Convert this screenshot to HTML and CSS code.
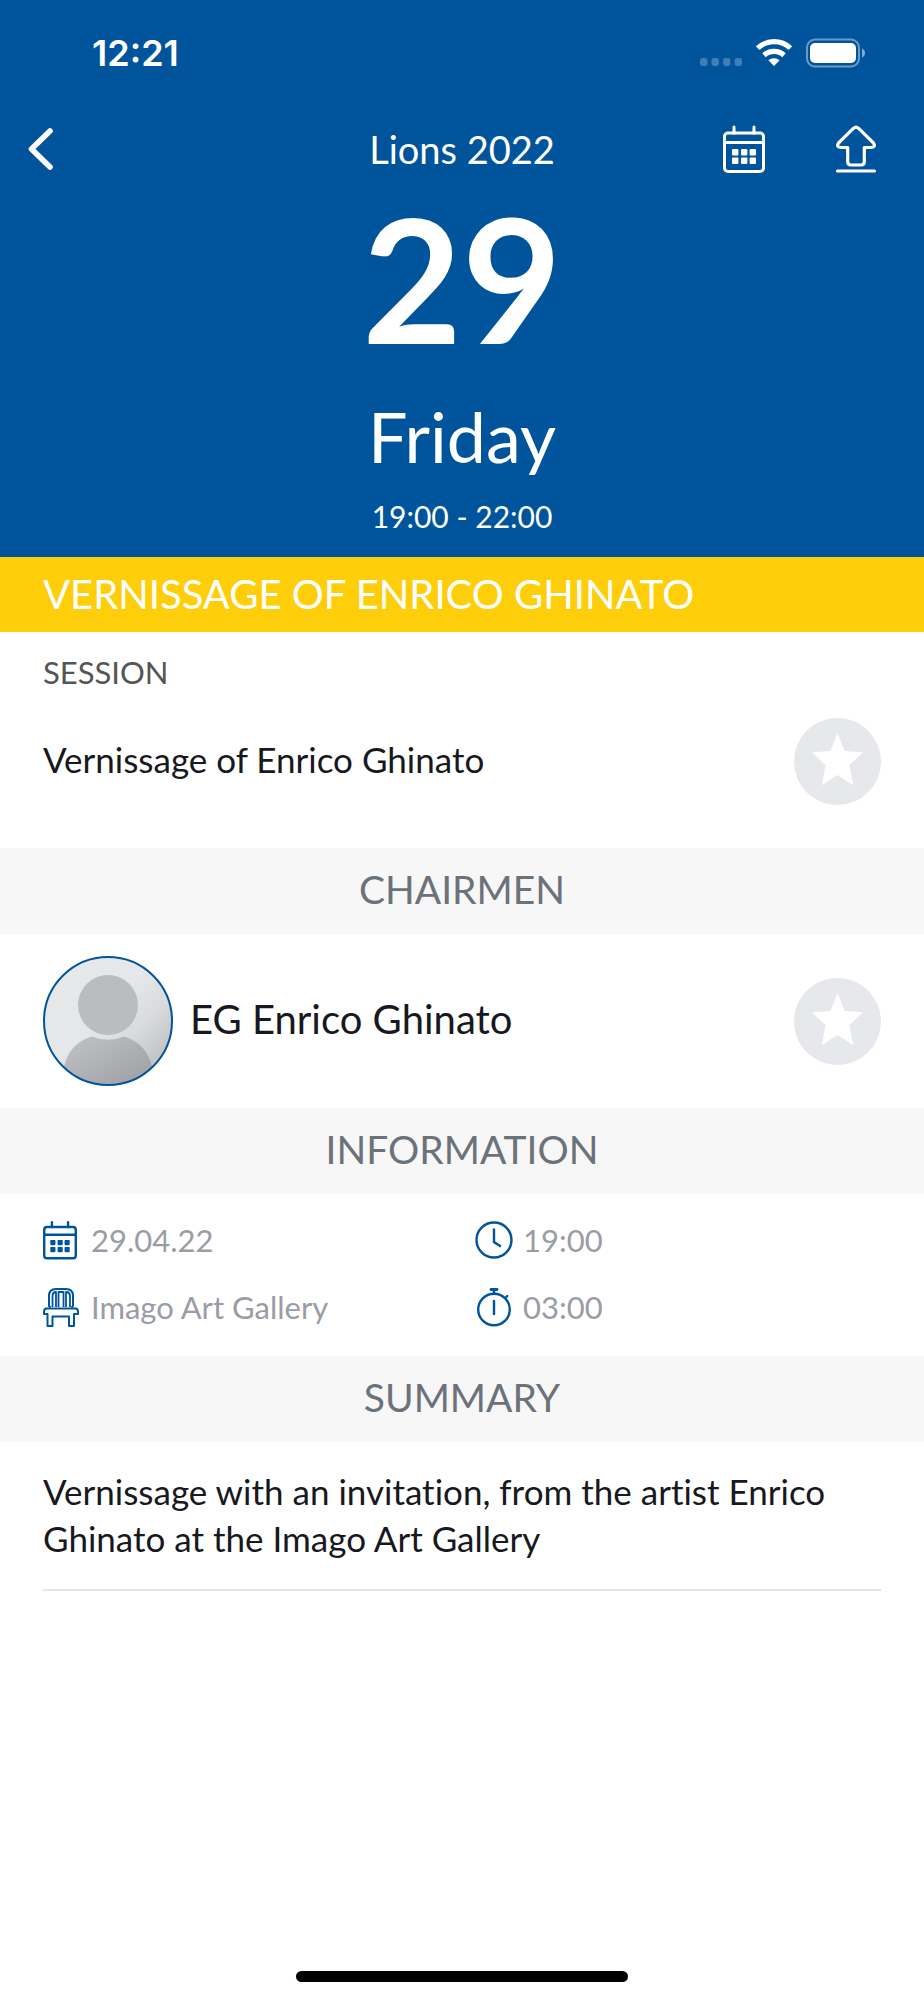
FILE: index.html
```html
<!DOCTYPE html>
<html lang="en">
<head>
<meta charset="utf-8">
<meta name="viewport" content="width=device-width, initial-scale=1">
<title>Lions 2022</title>
<link rel="stylesheet" href="styles.css">
</head>
<body>
<svg class="defs" aria-hidden="true">
  <symbol id="calendar" viewBox="0 0 42 48">
    <rect x="1.5" y="8" width="39" height="38.5" rx="3.5" fill="none" stroke="currentColor" stroke-width="3"/>
    <path d="M2 17.5h38M11 2v6M31 2v6" fill="none" stroke="currentColor" stroke-width="3" stroke-linecap="round"/>
    <g fill="currentColor"><rect x="9" y="24" width="6.4" height="6.4" rx="1"/><rect x="18" y="24" width="6.4" height="6.4" rx="1"/><rect x="26.6" y="24" width="6.4" height="6.4" rx="1"/><rect x="9" y="32.6" width="6.4" height="6.4" rx="1"/><rect x="18" y="32.6" width="6.4" height="6.4" rx="1"/><rect x="26.6" y="32.6" width="6.4" height="6.4" rx="1"/></g>
  </symbol>
  <symbol id="star" viewBox="0 0 87 87">
    <path d="M43.500 15l7 18 18.500 1.300-13.700 13 4 20-15.800-10.200-15.800 10.200 4-20L18 34.300 36.500 33z" fill="#fff"/>
  </symbol>
</svg>
<header class="hero">
  <div class="status">
    <span class="clock">12:21</span>
    <div class="indicators">
      <svg width="42" height="30" viewBox="0 0 42 30" fill="#fff" fill-opacity=".25"><rect y="20" width="7.4" height="8" rx="2.4"/><rect x="11.5" y="20" width="7.4" height="8" rx="2.4"/><rect x="23" y="20" width="7.4" height="8" rx="2.4"/><rect x="34.6" y="20" width="7.4" height="8" rx="2.4"/></svg>
      <svg width="38" height="30" viewBox="0 0 38 30"><g fill="none" stroke="#fff" stroke-width="5.2"><path d="M2.6 10.2a24 24 0 0 1 32.8 0"/><path d="M9 17.2a15 15 0 0 1 20 0"/></g><path d="M13.4 22.3a8.6 8.6 0 0 1 11.2 0L19 28z" fill="#fff"/></svg>
      <svg width="60" height="30" viewBox="0 0 60 30"><rect x="1" y="1.5" width="52" height="27" rx="8" fill="none" stroke="#fff" stroke-opacity=".42" stroke-width="2"/><rect x="4" y="5" width="46" height="20" rx="5" fill="#fff"/><path d="M56 10.5c4 1.500 4 7.500 0 9z" fill="#fff" fill-opacity=".5"/></svg>
    </div>
  </div>
  <nav class="bar">
    <button class="icon-button" type="button" aria-label="Back"><svg width="26" height="44" viewBox="0 0 26 44" fill="none" stroke="#fff" stroke-width="5.600" stroke-linecap="round" stroke-linejoin="round"><path d="M22 4L3.500 22 22 40"/></svg></button>
    <h1 class="bar-title">Lions 2022</h1>
    <div class="actions">
      <button class="icon-button" type="button" aria-label="Add to calendar"><svg width="42" height="48"><use href="#calendar"/></svg></button>
      <button class="icon-button" type="button" aria-label="Share"><svg width="42" height="48" viewBox="0 0 42 48" fill="none" stroke="#fff" stroke-width="3.200" stroke-linecap="round" stroke-linejoin="round"><path d="M18.600 3.200Q21 1 23.400 3.200L38.500 18Q41 22 36.500 22.500H29.300V36.500Q29.300 40 26 40H16Q12.700 40 12.700 36.500V22.500H5.500Q1 22 3.500 18z"/><path d="M2.500 46h37"/></svg></button>
    </div>
  </nav>
  <div class="day">29</div>
  <div class="weekday">Friday</div>
  <div class="hours">19:00 - 22:00</div>
</header>
<main>
  <h2 class="banner">VERNISSAGE OF ENRICO GHINATO</h2>
  <section class="session">
    <h3 class="label">SESSION</h3>
    <div class="row">
      <span class="session-name">Vernissage of Enrico Ghinato</span>
      <button class="favorite" type="button" aria-label="Favorite session"><svg width="87" height="87"><use href="#star"/></svg></button>
    </div>
  </section>
  <h2 class="band">CHAIRMEN</h2>
  <section class="row person">
    <svg width="130" height="130" viewBox="0 0 130 130" role="img" aria-label="Portrait placeholder">
      <defs>
        <linearGradient id="back" x1="0" y1="0" x2="1" y2="1"><stop offset=".45" stop-color="#e6e7e9"/><stop offset=".65" stop-color="#d9dadc"/><stop offset="1" stop-color="#b0b1b3"/></linearGradient>
        <linearGradient id="body" x1="0" y1="0" x2="1" y2="1"><stop offset=".2" stop-color="#bbbcbf"/><stop offset="1" stop-color="#9c9da0"/></linearGradient>
        <clipPath id="disc"><circle cx="65" cy="65" r="64"/></clipPath>
      </defs>
      <g clip-path="url(#disc)">
        <rect width="130" height="130" fill="url(#back)"/>
        <circle cx="65" cy="49" r="30" fill="#bbbcbf"/>
        <path d="M20 130V116Q24 88 49 80.500Q65 87 81 80.500Q106 88 110 116V130z" fill="url(#body)"/>
      </g>
      <circle cx="65" cy="65" r="64" fill="none" stroke="#00549c" stroke-width="2"/>
    </svg>
    <span class="person-name">EG Enrico Ghinato</span>
    <button class="favorite" type="button" aria-label="Favorite Enrico Ghinato"><svg width="87" height="87"><use href="#star"/></svg></button>
  </section>
  <h2 class="band">INFORMATION</h2>
  <ul class="facts">
    <li><svg width="38" height="40"><use href="#calendar" width="34" height="40"/></svg>29.04.22</li>
    <li><svg width="38" height="40" viewBox="0 0 38 40" fill="none" stroke="currentColor" stroke-width="2.400" stroke-linecap="round"><circle cx="19" cy="20" r="17.500"/><path d="M19 9.500V22l6 4"/></svg>19:00</li>
    <li><svg width="38" height="40" viewBox="0 0 38 40" fill="none" stroke="currentColor" stroke-width="2" stroke-linejoin="round"><path d="M7.500 20.500L6 19V9Q6 2 13 2h10q7 0 7 7v10l-1.500 1.500"/><path d="M9.500 20V9.500Q9.500 5 13 5v15M15.500 20V5h5v15M23 20V5q4 0 4 4.500V20" stroke-width="1.800"/><path d="M3.500 21.500h29q2.500 0 2.500 3.500v2h-4v12h-5v-9.500H9.500V39h-5V27H1v-2q0-3.500 2.500-3.500z"/></svg>Imago Art Gallery</li>
    <li><svg width="38" height="40" viewBox="0 0 38 40" fill="none" stroke="currentColor" stroke-width="2.400" stroke-linecap="round"><circle cx="19" cy="22.500" r="15.800"/><path d="M19 14v13M19 3v3.500M30.300 11l2-2"/><path d="M16 2.500h6" stroke-width="2.800"/></svg>03:00</li>
  </ul>
  <h2 class="band">SUMMARY</h2>
  <p class="summary">Vernissage with an invitation, from the artist Enrico Ghinato at the Imago Art Gallery</p>
</main>
<div class="home-indicator"></div>
</body>
</html>
```
FILE: styles.css
```css
* { box-sizing: border-box; }

body {
  margin: 0;
  min-height: 100vh;
  display: flex;
  flex-direction: column;
  background: #fff;
  color: #181820;
  font-family: Lato, "Noto Sans", sans-serif;
  font-variant-ligatures: none;
}

h1, h2, h3, p, ul { margin: 0; padding: 0; font-weight: 400; }
svg { display: block; flex: none; }
button { border: 0; padding: 0; background: none; color: inherit; cursor: pointer; }
.defs { position: absolute; width: 0; height: 0; }

.hero {
  padding-bottom: 21px;
  background: #00549c;
  color: #fff;
  text-align: center;
}

.status {
  display: flex;
  align-items: center;
  justify-content: space-between;
  height: 105px;
  padding: 0 58px 0 92px;
}
.clock { font: 600 36px/40px Inter, sans-serif; }
.indicators { display: flex; gap: 13px; }

.bar {
  display: grid;
  grid-template-columns: 1fr auto 1fr;
  align-items: center;
  height: 87px;
  padding: 0 47px 0 28px;
}
.bar-title { padding-left: 19px; font-size: 38px; line-height: 48px; }
.actions { display: flex; justify-content: flex-end; gap: 70px; }

.day { font-size: 172px; font-weight: 700; line-height: 172px; }
.weekday { margin-top: 32px; font-size: 70px; line-height: 80px; }
.hours { margin-top: 20px; font-size: 30px; line-height: 40px; }

.banner {
  padding: 13px 43px 14px;
  background: #ffce0b;
  color: #fff;
  font-size: 40px;
  line-height: 48px;
}

.session { padding: 20px 43px 43px; }
.label { color: #555; font-size: 31px; line-height: 40px; }
.row { display: flex; align-items: center; }
.session .row { margin-top: 26px; }
.session-name { flex: 1; padding-bottom: 4px; font-size: 35px; line-height: 47px; }
.favorite { border-radius: 50%; background: #e7e8ec; }

.band {
  padding: 17px 43px 21px;
  background: #f7f7f7;
  color: #6c7279;
  font-size: 39px;
  line-height: 48px;
  text-align: center;
}

.person { gap: 17px; padding: 22px 43px; }
.person-name { flex: 1; padding-bottom: 4px; font-size: 40px; line-height: 48px; }

.facts {
  display: grid;
  grid-template-columns: 1fr 1fr;
  gap: 27px 26px;
  padding: 26px 43px 29px;
  list-style: none;
  color: #9a9da5;
  font-size: 31px;
  line-height: 40px;
}
.facts li { display: flex; gap: 10px; }
.facts svg { color: #00549c; }

.summary {
  margin: 0 43px;
  padding: 26px 0 27px;
  border-bottom: 2px solid #e5e5e7;
  font-size: 35px;
  line-height: 47px;
}

.home-indicator {
  width: 36%;
  height: 11px;
  margin: auto auto 18px;
  border-radius: 6px;
  background: #000;
}
```
